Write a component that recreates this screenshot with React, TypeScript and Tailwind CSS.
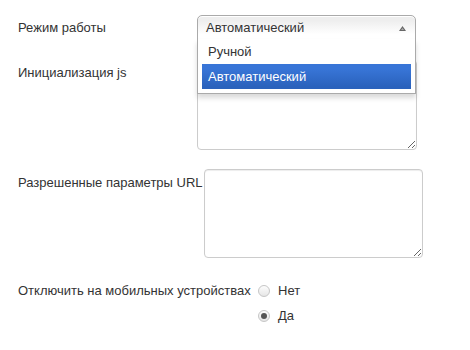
import React from "react";

function Radio({ checked }: { checked?: boolean }) {
  return (
    <span className="relative inline-flex w-[12px] h-[12px] rounded-full border border-[#c6c6c6] bg-[linear-gradient(#fdfdfd,#e6e6e6)] items-center justify-center">
      {checked ? <span className="w-[6px] h-[6px] rounded-full bg-[#555]" /> : null}
    </span>
  );
}

export default function App() {
  return (
    <div className="relative w-[470px] h-[350px] bg-white font-['Liberation_Sans',Arial,sans-serif] text-[13px] text-[#333] pl-[18px] pt-[15px]">
      {/* Row 1 */}
      <div className="flex">
        <div className="w-[179px] pt-[4px] leading-[18px]">Режим работы</div>
        <div className="relative w-[219px] z-10">
          <div className="relative h-[25px] border border-[#aaa] rounded-t-[5px] bg-[linear-gradient(#eeeeee_20%,#ffffff_80%)] pl-[8px] leading-[23px] shadow-[inset_0_1px_0_#fff]">
            Автоматический
            <svg className="absolute right-[9px] top-[10px]" width="7" height="5" viewBox="0 0 7 5">
              <path d="M3.5 0 L7 5 L0 5 Z" fill="#666" />
              <path d="M3.5 2 L5 4 L2 4 Z" fill="#aaa" />
            </svg>
          </div>
          <div className="absolute left-0 top-full mt-[-1px] w-full border border-[#aaa] border-t-0 bg-white shadow-[0_4px_5px_rgba(0,0,0,0.15)]">
            <ul className="mr-[4px] mb-[4px] pl-[4px]">
              <li className="px-[6px] py-[5px] leading-[15px]">Ручной</li>
              <li className="px-[6px] py-[5px] leading-[15px] text-white bg-[linear-gradient(#3875d7_20%,#2a62bc_90%)]">
                Автоматический
              </li>
            </ul>
          </div>
        </div>
      </div>

      {/* Row 2 */}
      <div className="flex mt-[20px]">
        <div className="w-[179px] pt-[4px] leading-[18px]">Инициализация js</div>
        <textarea className="w-[220px] h-[90px] border border-[#ccc] rounded-[4px] shadow-[inset_0_1px_1px_rgba(0,0,0,0.075)] bg-white outline-none" />
      </div>

      {/* Row 3 */}
      <div className="flex mt-[19px]">
        <div className="w-[186px] pt-[5px] leading-[18px]">Разрешенные параметры URL</div>
        <textarea className="w-[219px] h-[89px] border border-[#ccc] rounded-[4px] shadow-[inset_0_1px_1px_rgba(0,0,0,0.075)] bg-white outline-none" />
      </div>

      {/* Row 4 */}
      <div className="flex mt-[20px]">
        <div className="w-[240px] leading-[25px]">Отключить на мобильных устройствах</div>
        <div className="flex flex-col">
          <label className="h-[25px] flex items-center gap-[8px]">
            <Radio />
            <span>Нет</span>
          </label>
          <label className="h-[25px] flex items-center gap-[8px]">
            <Radio checked />
            <span>Да</span>
          </label>
        </div>
      </div>
    </div>
  );
}
